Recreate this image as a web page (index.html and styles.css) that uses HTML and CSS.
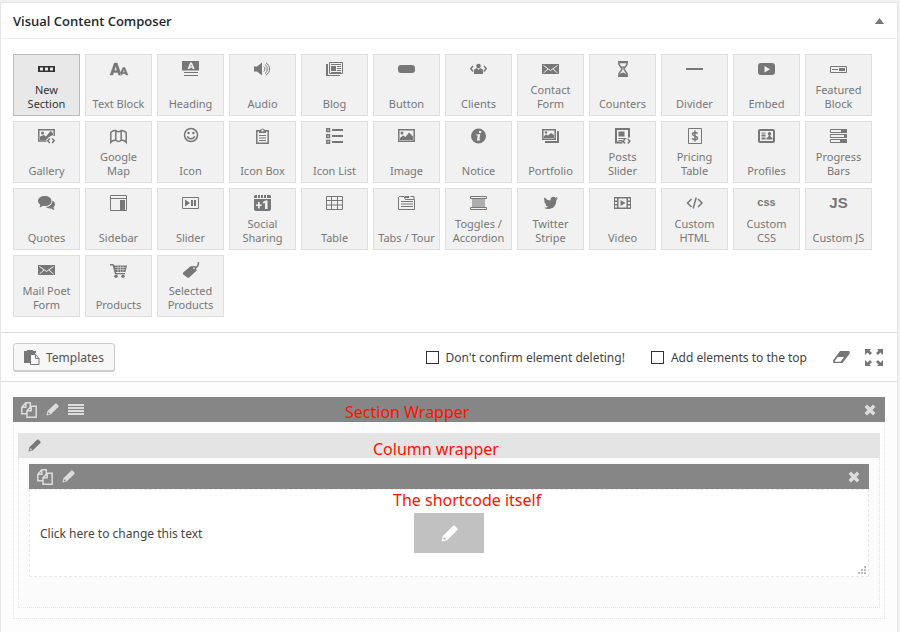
FILE: index.html
```html
<!DOCTYPE html>
<html lang="en">
<head>
<meta charset="utf-8">
<title>Visual Content Composer</title>
<link rel="stylesheet" href="styles.css">
</head>
<body>
<svg class="defs" aria-hidden="true">
  <symbol id="mail" viewBox="0 0 17 18"><path d="M0 4h17v10H0z"/><path class="cut" d="M1.500 5.500l7 5 7-5M1.500 13l4.500-4M15.500 13l-4.500-4"/></symbol>
  <symbol id="copy" viewBox="0 0 16 16"><path class="line2" d="M6 11.800H.8V5.300L4.800.8h4.500v4M4.800.8v4.500H.8M6 8.800l4.200-4.500h5v11H6zM10.200 4.300v4.500H6"/></symbol>
  <symbol id="pencil" viewBox="0 0 14 14"><path d="M.5 13.500l1-4.500L9.800.9c.6-.5 1.200-.5 1.700 0l1.800 1.700c.5.6.5 1.200 0 1.700L5 12.500zM1.700 11l1.300 1.300 1-.4-.2-1.500-1.600-.3z" fill-rule="evenodd"/></symbol>
  <symbol id="cross" viewBox="0 0 12 12"><path d="M3 .6L6 3.500 9 .6 11.400 3 8.500 6l2.900 3L9 11.400 6 8.500 3 11.400.6 9l2.900-3L.6 3z"/></symbol>
</svg>
<main class="panel">
  <header class="panel-head">
    <h1>Visual Content Composer</h1>
    <button class="toggle" aria-label="Collapse"><svg width="9" height="6" viewBox="0 0 9 6"><path d="M4.500 0L9 6H0z"/></svg></button>
  </header>

  <section class="tiles">
    <button class="tile active"><svg viewBox="0 0 17 18"><path fill-rule="evenodd" d="M0 6h17v6H0zM2 7.500v3h3v-3zM7 7.500v3h3v-3zM12 7.500v3h3v-3z"/></svg><span>New Section</span></button>
    <button class="tile"><svg viewBox="0 0 17 18"><path class="bold" fill-rule="evenodd" d="M0 15L4.300 3h2.900l4.200 12H8.600l-.8-2.500H3.600L2.800 15zM4.300 10.400h2.800L5.700 6zM9.800 15l3-7.500h2.100L18 15h-2.200l-.4-1.300h-3l-.5 1.300zM12.900 12.300h2L13.900 9.300z"/></svg><span>Text Block</span></button>
    <button class="tile"><svg viewBox="0 0 17 18"><path fill-rule="evenodd" d="M0 1h17v9.500H0zM5.500 9h2l.4-1.200h2.300l.4 1.200h2L9.900 2.500H8.200zM8.300 6.500l.8-2.200.7 2.200z"/><path d="M2 12h14v1H2zM2 15h14v1H2z"/></svg><span>Heading</span></button>
    <button class="tile"><svg viewBox="0 0 17 18"><path d="M0 6.500h3l5-4v13l-5-4H0z"/><path class="line" d="M9.800 6.500c1.500 1 1.500 4 0 5M11 4.500c3 2.200 3 6.800 0 9M12 2.800c4.800 3 4.800 9.400 0 12.400"/></svg><span>Audio</span></button>
    <button class="tile"><svg viewBox="0 0 17 18"><path class="line" d="M3.500 2.500h13v11h-13zM1 5v10.500h13M5 4.500h10"/><path d="M5 6h5v5H5zM11 6h4v1h-4zM11 8h4v1h-4zM11 10h4v1h-4zM5 12h10v1H5zM0 4h2v12H0z"/></svg><span>Blog</span></button>
    <button class="tile"><svg viewBox="0 0 17 18"><rect y="5" width="17" height="8" rx="3"/></svg><span>Button</span></button>
    <button class="tile"><svg viewBox="0 0 17 18"><circle cx="8.500" cy="6" r="2.300"/><path d="M4 14V9.500L7 8l1.500 2L10 8l3 1.500V14z"/><path class="line2" d="M3 6L.8 8.500 3 11.500M14 6l2.200 2.500L14 11.500"/></svg><span>Clients</span></button>
    <button class="tile"><svg><use href="#mail"/></svg><span>Contact Form</span></button>
    <button class="tile"><svg viewBox="0 0 17 18"><path class="line2" d="M5 2.500h8c1 3-3 5-3 6.500s4 3.500 3 6.500H5c-1-3 3-5 3-6.500S4 5.500 5 2.500z"/><path d="M4 1h10v1.500H4zM4 15.500h10V17H4zM5.500 14L9 12.500l3.500 1.500v2h-7zM7 6.500h4L9 8.500z"/></svg><span>Counters</span></button>
    <button class="tile"><svg viewBox="0 0 17 18"><path d="M0 8h17v2H0z"/></svg><span>Divider</span></button>
    <button class="tile"><svg viewBox="0 0 17 18"><path fill-rule="evenodd" d="M3 3h11q3 0 3 3v6q0 3-3 3H3q-3 0-3-3V6q0-3 3-3zM6.500 6v6.500l5.500-3.200z"/></svg><span>Embed</span></button>
    <button class="tile"><svg viewBox="0 0 17 18"><path class="line" d="M.5 6.500h16v6H.5z"/><path d="M2 9h6v1H2zM9 8h6v3H9z"/></svg><span>Featured Block</span></button>

    <button class="tile"><svg viewBox="0 0 17 18"><path class="line2" d="M8.500 14H.8V2.800h15.400V9"/><path d="M2 13V9.500l4-1.500 2 1.500L12.500 4 15 6v2l-4 2-3 3z"/><circle cx="4.500" cy="6" r="1.500"/><path class="line2" d="M11.800 11.500l-2 2.300 2 2.300M14.200 11.500l2 2.300-2 2.300"/></svg><span>Gallery</span></button>
    <button class="tile"><svg viewBox="0 0 17 18"><path class="line2" d="M.8 5.500q2-2.500 5-2 2.700 2.500 5.400 0 3 0 5 2v9.800q-2-2.500-5-2-2.700 2.500-5.400 0-3-.5-5 2zM5.800 3.500v10M11.200 3.500v10"/></svg><span>Google Map</span></button>
    <button class="tile"><svg viewBox="0 0 17 18"><circle class="line2" cx="9" cy="8" r="6.500"/><circle cx="6.600" cy="6" r="1.200"/><circle cx="11.400" cy="6" r="1.200"/><path class="line2" d="M5.300 9.300c1.500 3.300 5.900 3.300 7.400 0"/></svg><span>Icon</span></button>
    <button class="tile"><svg viewBox="0 0 17 18"><path class="line2" d="M5.500 3.800H2.800v12.500h11.400V3.800h-2.700"/><path fill-rule="evenodd" d="M5 6V3h1.200a2.500 2.500 0 0 1 4.600 0H12v3zM7.500 2.500v2h2v-2z"/><path d="M5 8h7v1H5zM5 10.500h7v1H5zM5 13h7v1H5z"/></svg><span>Icon Box</span></button>
    <button class="tile"><svg viewBox="0 0 17 18"><path class="line2" d="M.8 1.800h2.700v2.700H.8zM.8 7.800h2.700v2.700H.8zM.8 13.500h2.700v2.700H.8z"/><path d="M6 2h11v2H6zM6 8h11v2H6zM6 14h11v2H6z"/></svg><span>Icon List</span></button>
    <button class="tile"><svg viewBox="0 0 17 18"><path class="line2" d="M.8 2.800h15.400v11.400H.8z"/><circle cx="4" cy="6" r="1.500"/><path d="M2 13v-2l3-2.500L7.500 10 11 5.500l4 4V13z"/></svg><span>Image</span></button>
    <button class="tile"><svg viewBox="0 0 17 18"><path fill-rule="evenodd" d="M8.500 1.500a7.500 7.500 0 1 1 0 15 7.500 7.500 0 0 1 0-15zM9 4v2h2.200V4zM6.500 7.200v1.300h1.300l-1 5H10l.3-1.200h-1l1-5.100z"/></svg><span>Notice</span></button>
    <button class="tile"><svg viewBox="0 0 17 18"><path class="line2" d="M.8 2.800h12.400v9.400H.8z"/><path d="M15 4h2v12H3v-2h12zM2 11V9l2-1.500 2 1L9 6l3 2v3z"/><circle cx="4" cy="5.500" r="1.200"/></svg><span>Portfolio</span></button>
    <button class="tile"><svg viewBox="0 0 17 18"><path class="line3" d="M8.500 15.500H2V2h13v8.500"/><path d="M4.500 4.500h6v5h-6zM4.500 11h8v1h-8zM4.500 13h4v1h-4z"/><path class="line2" d="M11 12l-2 2.200 2 2.200M13.800 12l2 2.200-2 2.200"/></svg><span>Posts Slider</span></button>
    <button class="tile"><svg viewBox="0 0 17 18"><path class="line" d="M2.500 1.500h13v15h-13z"/><path class="line2" d="M11.600 6.600C11 5.300 6.500 4.800 6.500 7.200c0 2 5 1.500 5 3.800 0 2.500-4.800 2-5.300.3M9 3.500v11"/></svg><span>Pricing Table</span></button>
    <button class="tile"><svg viewBox="0 0 17 18"><rect class="line3" x="1" y="3" width="15" height="12" rx="1"/><circle cx="11.500" cy="6.800" r="1.800"/><path d="M3.500 5.500h4v1h-4zM3.500 7.500h4v2h-4zM3.500 10.500h4v2h-4zM11 8h1l1 2 1.500 1v1.500h-6V11l1.500-1z"/></svg><span>Profiles</span></button>
    <button class="tile"><svg viewBox="0 0 17 18"><path class="line" d="M.5 2.500h16v3H.5zM.5 7.500h16v3H.5zM.5 12.500h16v3H.5z"/><path d="M11 2h6v4h-6zM14 7h3v4h-3zM10 12h7v4h-7z"/></svg><span>Progress Bars</span></button>

    <button class="tile"><svg viewBox="0 0 17 18"><path d="M6.800 2C10.500 2 13.500 4 13.500 7s-3 5-6.700 5q-1 0-2-.2-1.500 1.500-3.500 1.500 1-1.200.9-2.600Q0 9.200 0 7c0-3 3-5 6.800-5z"/><path d="M14.500 6.500q2.500 1.300 2.500 3.700 0 1.800-1.500 3 .2 1.800 1.200 2.800-2.200-.1-3.600-1.500-3.500.4-5.400-1.400 6.500-.4 6.800-6.600z"/></svg><span>Quotes</span></button>
    <button class="tile"><svg viewBox="0 0 17 18"><path class="line" d="M.5 1.500h16v15H.5zM.5 4.500h16"/><path d="M10 6h5v10h-5z"/></svg><span>Sidebar</span></button>
    <button class="tile"><svg viewBox="0 0 17 18"><path class="line" d="M.5 3.500h16v11H.5z"/><path d="M3 5.500v7L8 9zM9 6h2v6H9zM12 6h2v6h-2z"/></svg><span>Slider</span></button>
    <button class="tile"><svg viewBox="0 0 17 18"><path fill-rule="evenodd" d="M0 5h17v10q0 2-2 2H2q-2 0-2-2zM4 8v2.500H2v1.500h2v2.500h1.700V12h2v-1.500h-2V8zM11.500 6.500L9 8v1.500l2-.6v6h2.500V6.500zM0 4V2l1-1h2v3zM4 1h2v3H4zM7 1h2v3H7zM10 1h2v3h-2zM13 1h3l1 1v2h-4z"/></svg><span>Social Sharing</span></button>
    <button class="tile"><svg viewBox="0 0 17 18"><path class="line" d="M.5 2.500h16v13H.5zM.5 6.500h16M.5 11h16M5.500 2.500v13M11.500 2.500v13"/></svg><span>Table</span></button>
    <button class="tile"><svg viewBox="0 0 17 18"><path class="line" d="M.5 15.500v-12l1-1H6l1.500 3h9v10H.5M7 2.500h4v1H7zM12.500 2.500h3.500v3M3 7.500h12M3 10h12M3 12.500h12"/></svg><span>Tabs / Tour</span></button>
    <button class="tile"><svg viewBox="0 0 17 18"><path opacity=".55" d="M2 5h13v8H2z"/><path class="line" d="M.5 2.500h16v2H.5zM.5 13.500h16v2H.5z"/></svg><span>Toggles / Accordion</span></button>
    <button class="tile"><svg viewBox="0 0 17 18"><path d="M2.500 3.500q2.500 3 6 3c-.5-4 3.500-4.700 5-2.800l2-.9-1.200 1.900 1.700-.4-1.700 1.800C14.300 12 11 15 6.500 15q-2.600 0-4.500-1.300 2.500.1 4-1.200-2-.2-2.700-2h1.200Q2.100 9.600 2.200 7.200l1.200.3Q1.200 5.900 2.500 3.500z"/></svg><span>Twitter Stripe</span></button>
    <button class="tile"><svg viewBox="0 0 17 18"><path fill-rule="evenodd" d="M0 3h17v12H0zM1 4.500v2h2v-2zM1 8v2h2V8zM1 11.500v2h2v-2zM14 4.500v2h2v-2zM14 8v2h2V8zM14 11.500v2h2v-2zM4.500 4.500v9h8v-9z"/><path d="M6.500 6v6l5-3z"/></svg><span>Video</span></button>
    <button class="tile"><svg viewBox="0 0 17 18"><path class="line2" d="M5.500 5L1.500 9l4 4M12 5l4 4-4 4M10.200 3.500l-3 11"/></svg><span>Custom HTML</span></button>
    <button class="tile"><svg viewBox="0 0 17 18"><text class="css-glyph" x="8.500" y="12" text-anchor="middle">css</text></svg><span>Custom CSS</span></button>
    <button class="tile"><svg viewBox="0 0 17 18"><text class="js-glyph" x="8.500" y="14" text-anchor="middle">JS</text></svg><span>Custom JS</span></button>

    <button class="tile"><svg><use href="#mail"/></svg><span>Mail Poet Form</span></button>
    <button class="tile"><svg viewBox="0 0 17 18"><path d="M0 3h3.500l.6 1.500H17L15.500 11H6l.3 1H15v1.300H5L2.600 4.500H0z"/><circle cx="6" cy="15.300" r="1.700"/><circle cx="13" cy="15.300" r="1.700"/><path class="cut thin" d="M5 6.500h11M5.500 8.700h10M8 5v6M10.500 5v6M13 5v6"/></svg><span>Products</span></button>
    <button class="tile"><svg viewBox="0 0 17 18"><path fill-rule="evenodd" d="M1.200 11.500L8.500 5.200l5-.2 1.200 4.500-7.500 7q-1 .7-1.900-.1l-4-3q-.9-1-.1-1.900zM11.300 6.300v1.700H13V6.300z"/><path class="line2" d="M12.500 7c3.500-.5 4-3 4-6"/></svg><span>Selected Products</span></button>
  </section>

  <section class="toolbar">
    <button class="templates"><svg width="16" height="15" viewBox="0 0 16 15"><path d="M0 1h3V0h6v1h3v2H6v10H0z"/><path d="M0 1h11v4H7v8H0z"/><path class="paper" d="M6.500 4.500h5l3.500 4v6H6.500zM11.500 4.500v4H15"/></svg><span>Templates</span></button>
    <div class="options">
      <label><input type="checkbox"><span>Don't confirm element deleting!</span></label>
      <label><input type="checkbox"><span>Add elements to the top</span></label>
      <button class="plain" aria-label="Clear"><svg width="17" height="13" viewBox="0 0 17 13"><path fill-rule="evenodd" d="M7 0h9.500l.3 2.500L9.500 12H.3L0 9.500zM4.800 6L1.800 9.900v.8h5.700l3.500-4.700z"/></svg></button>
      <button class="plain" aria-label="Full screen"><svg width="18" height="17" viewBox="0 0 18 17"><path d="M0 0h6L4.500 1.500 7 4 5 6 2.500 3.500 0 6zM18 0v6l-2.500-2.500L13 6l-2-2 2.500-2.500L12 0zM0 17v-6l2.500 2.500L5 11l2 2-2.500 2.500L6 17zM18 17h-6l1.500-1.500L11 13l2-2 2.500 2.500L18 11z"/></svg></button>
    </div>
  </section>

  <section class="canvas">
    <div class="bar dark">
      <button class="plain" aria-label="Clone section"><svg width="16" height="16"><use href="#copy"/></svg></button>
      <button class="plain" aria-label="Edit section"><svg width="13" height="13"><use href="#pencil"/></svg></button>
      <button class="plain" aria-label="Columns"><svg width="16" height="11" viewBox="0 0 16 11"><path d="M0 0h16v2H0zM0 3h16v2H0zM0 6h16v2H0zM0 9h16v2H0z"/></svg></button>
      <button class="plain close" aria-label="Delete section"><svg width="12" height="12"><use href="#cross"/></svg></button>
      <span class="note note-section">Section Wrapper</span>
    </div>
    <div class="section-body">
      <div class="bar light">
        <button class="plain" aria-label="Edit column"><svg width="13" height="13"><use href="#pencil"/></svg></button>
        <span class="note note-column">Column wrapper</span>
      </div>
      <div class="column-body">
        <div class="bar dark">
          <button class="plain" aria-label="Clone element"><svg width="16" height="16"><use href="#copy"/></svg></button>
          <button class="plain" aria-label="Edit element"><svg width="13" height="13"><use href="#pencil"/></svg></button>
          <button class="plain close" aria-label="Delete element"><svg width="12" height="12"><use href="#cross"/></svg></button>
        </div>
        <div class="element-body">
          <p>Click here to change this text</p>
          <button class="edit" aria-label="Edit text"><svg width="17" height="17"><use href="#pencil"/></svg></button>
          <span class="note note-element">The shortcode itself</span>
          <svg class="grip" width="8" height="8" viewBox="0 0 8 8"><path d="M6 0h2v2H6zM3 3h2v2H3zM6 3h2v2H6zM0 6h2v2H0zM3 6h2v2H3zM6 6h2v2H6z"/></svg>
        </div>
      </div>
    </div>
  </section>
</main>
</body>
</html>
```
FILE: styles.css
```css
* { box-sizing: border-box; }
html { height: 100%; }
body {
  margin: 0;
  min-height: 100%;
  display: flex;
  padding: 2px 2px 0 0;
  background: #f1f1f1;
  color: #444;
  font: 12px/18px "Noto Sans", "Open Sans", sans-serif;
}
button { font: inherit; color: inherit; cursor: pointer; }
svg { display: block; fill: currentColor; }
.defs { position: absolute; width: 0; height: 0; }
.line, .line2, .line3, .cut { fill: none; stroke: currentColor; stroke-width: 1; }
.line2 { stroke-width: 1.5; }
.line3 { stroke-width: 2; }
.bold { stroke: currentColor; stroke-width: 0.4; }
.cut { stroke: #f1f1f1; }
.thin { stroke-width: 0.5; }

.panel {
  flex: 1;
  display: flex;
  flex-direction: column;
  background: #fff;
  border: 1px solid #e5e5e5;
  border-bottom: 0;
}
.panel-head {
  display: flex;
  align-items: center;
  justify-content: space-between;
  height: 36px;
  padding: 0 13px 0 12px;
  border-bottom: 1px solid #eee;
}
h1 { margin: 0; font: 600 13px/18px "Open Sans", sans-serif; color: #23282d; }
.toggle, .plain { display: block; padding: 0; border: 0; background: none; color: #72777c; }

.tiles {
  display: flex;
  flex-wrap: wrap;
  gap: 5px;
  padding: 15px 20px 15px 12px;
}
.tile {
  display: flex;
  flex-direction: column;
  align-items: center;
  justify-content: space-between;
  width: 67px;
  height: 62px;
  padding: 5px 4px 4px;
  border: 1px solid #dfdfdf;
  background: #f1f1f1;
  color: #777;
  font-size: 11px;
  line-height: 14px;
}
.tile svg { width: 17px; height: 18px; overflow: visible; }
.tile.active { background: #e8e8e8; border-color: #bbb; color: #333; }
.css-glyph { font: bold 11px "Liberation Sans", sans-serif; }
.js-glyph { font: bold 15px "Liberation Sans", sans-serif; }

.toolbar {
  display: flex;
  align-items: center;
  justify-content: space-between;
  height: 50px;
  padding: 0 14px 0 12px;
  border: solid #ddd;
  border-width: 1px 0;
}
.templates {
  display: flex;
  align-items: center;
  gap: 6px;
  height: 28px;
  padding: 0 10px;
  border: 1px solid #ccc;
  border-radius: 3px;
  background: #f7f7f7;
  box-shadow: 0 1px 0 #ccc;
  color: #555;
}
.templates svg { color: #777; }
.templates span, .options span, .element-body p { padding-top: 2px; }
.paper { fill: #f7f7f7; stroke: currentColor; }
.options { display: flex; align-items: center; }
.options label { display: flex; align-items: center; gap: 7px; margin-right: 26px; }
.options input { appearance: none; width: 13px; height: 13px; margin: 0; border: 1px solid #333; background: #fff; }
.options .plain { color: #777; }
.options .plain + .plain { margin-left: 15px; }

.canvas { flex: 1; padding: 15px 12px 13px; background: #fdfdfd; }
.bar { position: relative; display: flex; align-items: center; gap: 9px; height: 25px; padding: 0 9px 0 8px; }
.dark { background: #868686; }
.dark .plain { color: #ddd; }
.light { background: #e4e4e4; padding-left: 10px; }
.light .plain { color: #777; }
.bar .close { margin-left: auto; }
.section-body { padding: 11px 4px 10px; border: 1px dotted #e5e5e5; border-top: 0; }
.column-body { padding: 6px 10px 30px; border: 1px dotted #e5e5e5; border-top: 0; background: #fbfbfb; }
.element-body {
  position: relative;
  display: flex;
  align-items: center;
  height: 88px;
  padding: 0 10px;
  border: 1px dashed #e8e8e8;
  background: #fff;
}
.element-body p { margin: 0; }
.edit {
  position: absolute;
  left: 50%;
  top: 50%;
  display: flex;
  align-items: center;
  justify-content: center;
  width: 70px;
  height: 40px;
  margin: -20px 0 0 -35px;
  border: 0;
  background: #c1c1c1;
  color: #fff;
}
.grip { position: absolute; right: 2px; bottom: 2px; color: #bbb; }
.note { position: absolute; font: 16px/20px "Noto Sans", sans-serif; color: #ff1100; white-space: nowrap; }
.note-section { left: calc(50% - 104px); top: 5px; }
.note-column { left: calc(50% - 76px); top: 6px; }
.note-element { left: calc(50% - 56px); top: 0; }
```
